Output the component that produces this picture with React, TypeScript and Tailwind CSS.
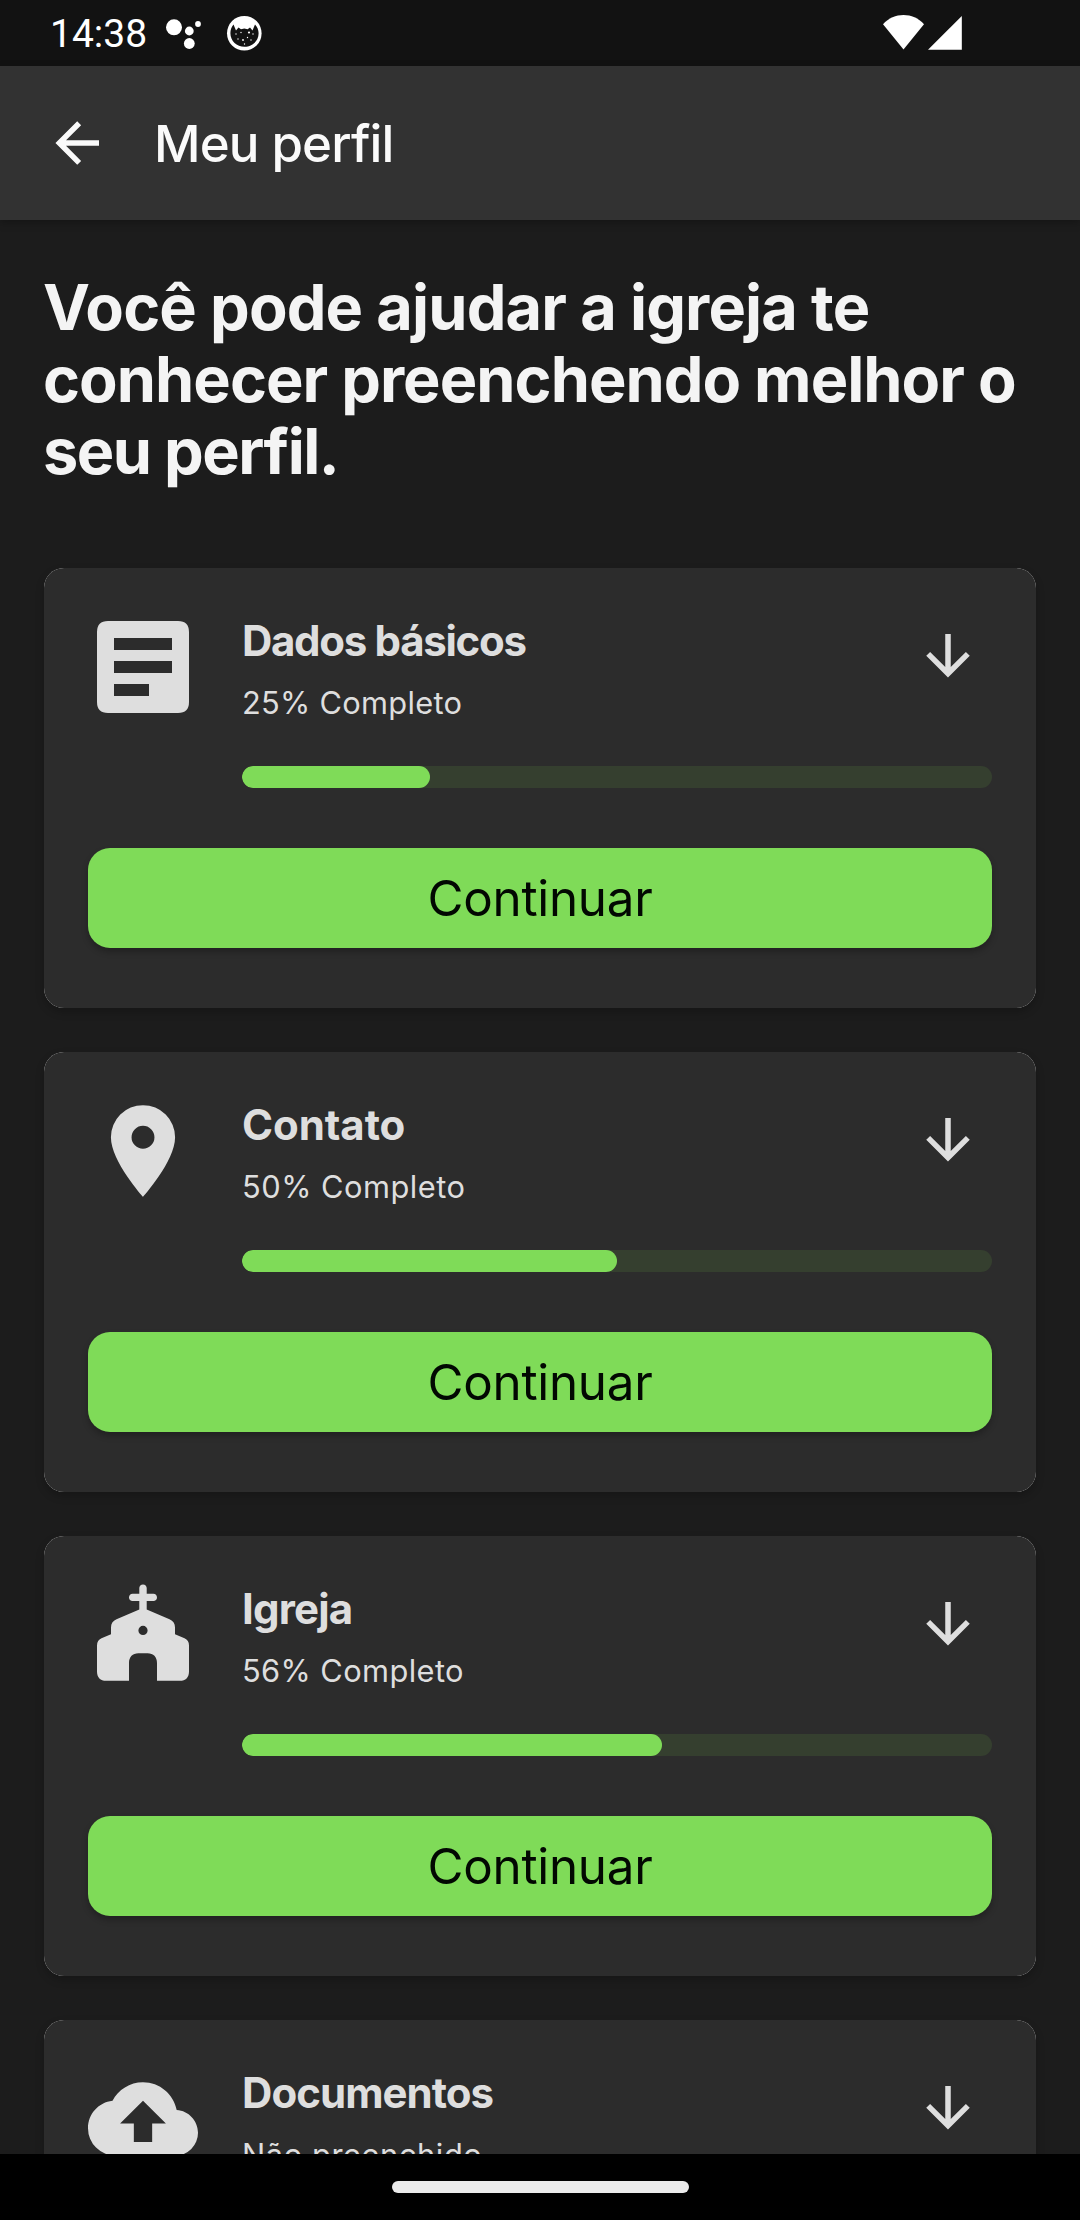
import type { ReactNode } from "react";

function ArrowLeft() {
  return (
    <svg className="size-[66px] fill-[#fafafa]" viewBox="0 0 24 24">
      <path d="M20,11V13H8L13.5,18.5L12.08,19.92L4.16,12L12.08,4.08L13.5,5.5L8,11H20Z" />
    </svg>
  );
}

function ArrowDown() {
  return (
    <svg className="size-[66px] fill-[#dedede]" viewBox="0 0 24 24">
      <path d="M11,4H13V16L18.5,10.5L19.92,11.92L12,19.84L4.08,11.92L5.5,10.5L11,16V4Z" />
    </svg>
  );
}

const iconClass = "size-[110px] shrink-0 fill-[#dedede]";

function ArticleIcon() {
  return (
    <svg className={iconClass} viewBox="0 0 110 110">
      <path
        fillRule="evenodd"
        d="M20 9H90Q101 9 101 20V90Q101 101 90 101H20Q9 101 9 90V20Q9 9 20 9ZM26 26V38H84V26ZM26 49V61H84V49ZM26 72V84H61V72Z"
      />
    </svg>
  );
}

function PinIcon() {
  return (
    <svg className={iconClass} viewBox="0 0 24 24">
      <path d="M12,11.5A2.5,2.5 0 0,1 9.5,9A2.5,2.5 0 0,1 12,6.5A2.5,2.5 0 0,1 14.5,9A2.5,2.5 0 0,1 12,11.5M12,2A7,7 0 0,0 5,9C5,14.25 12,22 12,22C12,22 19,14.25 19,9A7,7 0 0,0 12,2Z" />
    </svg>
  );
}

function ChurchIcon() {
  return (
    <svg className={iconClass} viewBox="0 0 110 110">
      <path
        fillRule="evenodd"
        d="M55 4.4C57.2 4.4 58.7 6 58.7 8V13.8H65.4C67.5 13.8 69 15.3 69 17.4C69 19.5 67.5 21 65.4 21H58.7V29.5L81.5 39.3C85.3 41 87 43.6 87 47.5V54.3L96.5 58.3C99.5 59.7 101 62 101 65.5V91.5C101 97.5 97.7 100.8 91.8 100.8H69V83C69 77 65.4 73.3 59.6 73.3H50.4C44.6 73.3 41 77 41 83V100.8H18.2C12.3 100.8 9 97.5 9 91.5V65.5C9 62 10.5 59.7 13.5 58.3L23 54.3V47.5C23 43.6 24.7 41 28.5 39.3L51.3 29.5V21H44.6C42.5 21 41 19.5 41 17.4C41 15.3 42.5 13.8 44.6 13.8H51.3V8C51.3 6 52.8 4.4 55 4.4ZM55 45.8A4.6 4.6 0 1 0 55 55A4.6 4.6 0 1 0 55 45.8Z"
      />
    </svg>
  );
}

function CloudIcon() {
  return (
    <svg className={iconClass} viewBox="0 0 24 24">
      <path d="M14,13V17H10V13H7L12,8L17,13M19.35,10.03C18.67,6.59 15.64,4 12,4C9.11,4 6.6,5.64 5.35,8.03C2.34,8.36 0,10.9 0,14A6,6 0 0,0 6,20H19A5,5 0 0,0 24,15C24,12.36 21.95,10.19 19.35,10.03Z" />
    </svg>
  );
}

type Section = {
  title: string;
  titleSpacing: string;
  status: string;
  statusSpacing: string;
  percent: number;
  icon: ReactNode;
};

const sections: Section[] = [
  {
    title: "Dados básicos",
    titleSpacing: "tracking-[-1.3px]",
    status: "25% Completo",
    statusSpacing: "tracking-[0.28px]",
    percent: 25,
    icon: <ArticleIcon />,
  },
  {
    title: "Contato",
    titleSpacing: "tracking-[-0.05px]",
    status: "50% Completo",
    statusSpacing: "tracking-[0.5px]",
    percent: 50,
    icon: <PinIcon />,
  },
  {
    title: "Igreja",
    titleSpacing: "tracking-[-0.8px]",
    status: "56% Completo",
    statusSpacing: "tracking-[0.4px]",
    percent: 56,
    icon: <ChurchIcon />,
  },
  {
    title: "Documentos",
    titleSpacing: "tracking-[-0.95px]",
    status: "Não preenchido",
    statusSpacing: "tracking-[0.58px]",
    percent: 0,
    icon: <CloudIcon />,
  },
];

function SectionCard({ section }: { section: Section }) {
  return (
    <article className="h-[440px] shrink-0 rounded-[20px] bg-[#f0f0f0] shadow-[0_4px_8px_rgba(0,0,0,0.22)]">
      <div className="flex h-full flex-col rounded-[20px] bg-[#2c2c2c] px-11">
        <div className="flex">
          <div className="pt-11">{section.icon}</div>
          <div className="ml-11 flex-1">
            <div className="flex h-[155px] justify-between">
              <div className="pt-[48px] text-[#dedede]">
                <h2 className={`text-[42px] leading-[50px] font-bold whitespace-nowrap ${section.titleSpacing}`}>
                  {section.title}
                </h2>
                <p className={`mt-[17px] text-[30.8px] leading-[40px] whitespace-nowrap ${section.statusSpacing}`}>
                  {section.status}
                </p>
              </div>
              <div className="mr-[11px] pt-[55px]">
                <ArrowDown />
              </div>
            </div>
            <div className="mt-[43px] h-[22px] overflow-hidden rounded-full bg-[#353f2f]">
              <div className="h-full rounded-full bg-[#7fdb58]" style={{ width: `${section.percent}%` }} />
            </div>
          </div>
        </div>
        <button className="mt-[60px] h-[100px] w-full rounded-[22px] bg-[#7fdb58] pt-[2px] text-[49.3px] tracking-[-0.26px] text-[#020802] shadow-[0_4px_6px_rgba(0,0,0,0.25)]">
          Continuar
        </button>
      </div>
    </article>
  );
}

function StatusBar() {
  return (
    <div className="flex h-[66px] shrink-0 items-center bg-[#121212] pr-[116px] pl-[50px]">
      <span className="pt-[3px] font-['Roboto',sans-serif] text-[39px] leading-none text-white">14:38</span>
      <svg className="ml-auto h-[66px] w-[120px] fill-white" viewBox="160 0 120 66">
        <circle cx="174" cy="27.3" r="8" />
        <circle cx="189.3" cy="31" r="4.4" />
        <circle cx="198" cy="24" r="2.9" />
        <circle cx="189.3" cy="43.5" r="5.4" />
        <circle cx="244.3" cy="33.3" r="17.3" />
        <path
          className="fill-[#121212]"
          d="M233.5 24.5L236 30.5L238.5 27.5L241 29.3L244.3 28.5L247.6 29.3L250 27.5L252.5 30.5L255 24.5C257.4 27 258.6 30 258.6 33.3C258.6 41 252.3 46.8 244.5 46.8C236.7 46.8 230.4 41 230.4 33.3C230.4 29.8 231.4 27 233.5 24.5Z"
        />
        <circle cx="236" cy="34" r="0.7" />
        <circle cx="241" cy="32.5" r="0.7" />
        <circle cx="249" cy="32.5" r="1.1" />
        <circle cx="253" cy="34" r="0.7" />
        <circle cx="238" cy="39" r="0.7" />
        <circle cx="243" cy="40" r="0.9" />
        <circle cx="247.5" cy="37.5" r="0.7" />
        <circle cx="251" cy="40" r="0.7" />
        <circle cx="244.5" cy="44" r="0.7" />
      </svg>
      <div className="w-[603px]" />
      <svg className="h-[66px] w-[81px] fill-white" viewBox="883 0 81 66">
        <path d="M883 24.3C894 12 913 12 924 24.3L903.5 49.5Z" />
        <path d="M928 49.7L961.8 16V49.7Z" />
      </svg>
    </div>
  );
}

export default function App() {
  return (
    <div className="flex h-[2220px] w-[1080px] flex-col overflow-hidden bg-[#1c1c1c] font-['Inter',sans-serif]">
      <StatusBar />
      <header className="flex h-[154px] shrink-0 items-center gap-11 bg-[#323232] pl-11 shadow-[0_3px_8px_rgba(0,0,0,0.25)]">
        <ArrowLeft />
        <h1 className="pt-[2px] text-[51px] font-medium tracking-[-0.85px] text-[#fafafa]">Meu perfil</h1>
      </header>
      <main className="flex min-h-0 flex-1 flex-col overflow-hidden px-11 pt-[51px]">
        <p className="-ml-px h-[216px] shrink-0 text-[63px] leading-[72px] font-bold whitespace-nowrap text-[#f4f4f4]">
          <span className="block tracking-[-0.85px]">Você pode ajudar a igreja te</span>
          <span className="block tracking-[-0.96px]">conhecer preenchendo melhor o</span>
          <span className="block tracking-[-1.5px]">seu perfil.</span>
        </p>
        <div className="mt-[81px] flex flex-col gap-11">
          {sections.map((section) => (
            <SectionCard key={section.title} section={section} />
          ))}
        </div>
      </main>
      <footer className="z-10 flex h-[66px] shrink-0 items-center justify-center bg-black">
        <div className="h-3 w-[297px] rounded-full bg-[#ebebeb]" />
      </footer>
    </div>
  );
}
